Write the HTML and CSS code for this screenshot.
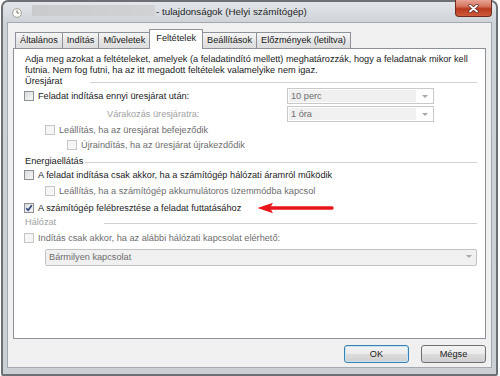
FILE: index.html
```html
<!DOCTYPE html>
<html lang="hu">
<head>
    <meta charset="UTF-8">
    <meta name="viewport" content="width=device-width, initial-scale=1.0">
    <title>tulajdonságok (Helyi számítógép)</title>
    <link rel="stylesheet" href="styles.css">
</head>
<body>
    <div class="window">
        <div class="titlebar">
            <svg class="app-icon" width="10" height="10" viewBox="0 0 10 10">
                <circle cx="5" cy="5" r="4.4" fill="#fbfbf6" stroke="#9a9a92" stroke-width="0.9"/>
                <path d="M5 2.2 V5 H7.2" fill="none" stroke="#6b6b66" stroke-width="0.9"/>
            </svg>
            <span class="task-name"></span>
            <span class="title">- tulajdonságok (Helyi számítógép)</span>
            <div class="close-btn">
                <svg width="11" height="9" viewBox="0 0 11 9">
                    <path d="M2 1.5 L9 7.5 M9 1.5 L2 7.5" stroke="#5a2a22" stroke-width="3.2" stroke-linecap="round"/>
                    <path d="M2 1.5 L9 7.5 M9 1.5 L2 7.5" stroke="#fff" stroke-width="1.8" stroke-linecap="round"/>
                </svg>
            </div>
        </div>

        <div class="client">
            <div class="tabs">
                <div class="tab">Általános</div>
                <div class="tab">Indítás</div>
                <div class="tab">Műveletek</div>
                <div class="tab active">Feltételek</div>
                <div class="tab">Beállítások</div>
                <div class="tab">Előzmények (letiltva)</div>
            </div>

            <div class="panel">
                <p class="intro">Adja meg azokat a feltételeket, amelyek (a feladatindító mellett) meghatározzák, hogy a feladatnak mikor kell<br>futnia. Nem fog futni, ha az itt megadott feltételek valamelyike nem igaz.</p>

                <div class="section">
                    <span class="section-label idle">Üresjárat</span>
                    <span class="section-line"></span>
                </div>
                <div class="row mt3">
                    <label class="check"><span class="box"></span>Feladat indítása ennyi üresjárat után:</label>
                    <div class="combo">
                        <span class="combo-value">10 perc</span>
                        <span class="combo-arrow"></span>
                    </div>
                </div>
                <div class="row mt4">
                    <span class="wait-label">Várakozás üresjáratra:</span>
                    <div class="combo">
                        <span class="combo-value">1 óra</span>
                        <span class="combo-arrow"></span>
                    </div>
                </div>
                <div class="row mt2 indent1">
                    <label class="check muted"><span class="box disabled"></span>Leállítás, ha az üresjárat befejeződik</label>
                </div>
                <div class="row mt1 indent2">
                    <label class="check muted"><span class="box disabled"></span>Újraindítás, ha az üresjárat újrakezdődik</label>
                </div>

                <div class="section mt4">
                    <span class="section-label power">Energiaellátás</span>
                    <span class="section-line"></span>
                </div>
                <div class="row mt2">
                    <label class="check"><span class="box"></span>A feladat indítása csak akkor, ha a számítógép hálózati áramról működik</label>
                </div>
                <div class="row mt2 indent1">
                    <label class="check muted"><span class="box disabled"></span>Leállítás, ha a számítógép akkumulátoros üzemmódba kapcsol</label>
                </div>
                <div class="row mt3">
                    <label class="check"><span class="box checked">
                        <svg width="8" height="8" viewBox="0 0 8 8"><path d="M1.3 4.2 L3.2 6.3 L6.8 1.2" fill="none" stroke="#2c3f7a" stroke-width="1.5"/></svg>
                    </span>A számítógép felébresztése a feladat futtatásához</label>
                    <svg class="red-arrow" width="78" height="12" viewBox="0 0 78 12">
                        <path d="M14 6 H75" stroke="#e8151b" stroke-width="3.4" stroke-linecap="round"/>
                        <path d="M0.5 6 L16 0.8 L13 6 L16 11.2 Z" fill="#e8151b"/>
                    </svg>
                </div>

                <div class="section mt2">
                    <span class="section-label net muted-light">Hálózat</span>
                    <span class="section-line"></span>
                </div>
                <div class="row mt4">
                    <label class="check muted"><span class="box disabled"></span>Indítás csak akkor, ha az alábbi hálózati kapcsolat elérhető:</label>
                </div>
                <div class="combo wide">
                    <span class="combo-value">Bármilyen kapcsolat</span>
                    <span class="combo-arrow"></span>
                </div>
            </div>

            <div class="buttons">
                <button class="btn default">OK</button>
                <button class="btn">Mégse</button>
            </div>
        </div>
    </div>
</body>
</html>
```

FILE: styles.css
```css
body {
    margin: 0;
    background: #fff;
    font-family: "Liberation Sans", Arial, sans-serif;
    font-size: 9.2px;
    color: #1b1b1b;
}
.window {
    box-sizing: border-box;
    width: 497px;
    height: 376px;
    margin-left: 1px;
    border: 2px solid #6c7075;
    border-radius: 7px 7px 2px 2px;
    background: linear-gradient(#e3e6e9, #cdd2d7 22px, #cbd0d5);
    padding: 0 4px 6px;
    display: flex;
    flex-direction: column;
}
.titlebar {
    height: 20px;
    display: flex;
    align-items: center;
    position: relative;
}
.app-icon {
    margin: 2px 0 0 5px;
}
.task-name {
    width: 123px;
    height: 11px;
    margin: -3px 0 0 10px;
    background: linear-gradient(90deg, #c9cbcd, #d0d2d4);
    filter: blur(0.6px);
}
.title {
    margin: -1px 0 0 1px;
    font-size: 9.8px;
    color: #1f1f1f;
}
.close-btn {
    position: absolute;
    right: 0;
    top: -2px;
    width: 37px;
    height: 17px;
    box-sizing: border-box;
    border: 1px solid #6e2c20;
    border-top: none;
    border-radius: 0 0 4px 4px;
    background: linear-gradient(#e8a394, #d4735e 40%, #b83a1f 55%, #cf5a3c);
    display: flex;
    align-items: center;
    justify-content: center;
}
.client {
    flex: 1;
    background: #f0f0f0;
    border: 1px solid #a3a9b0;
    padding: 7px 5px 0;
    display: flex;
    flex-direction: column;
}
.tabs {
    display: flex;
    align-items: flex-end;
    height: 18px;
    margin-left: 2px;
}
.tab {
    height: 15px;
    line-height: 15px;
    padding: 0 4px;
    border: 1px solid #8d9199;
    border-bottom: none;
    margin-right: -1px;
    background: linear-gradient(#f6f6f6, #e6e6e6 50%, #dcdcdc);
    white-space: nowrap;
}
.tab.active {
    position: relative;
    z-index: 1;
    height: 19px;
    line-height: 17px;
    margin-bottom: -1px;
    padding: 0 6px;
    background: #fff;
}
.panel {
    height: 291px;
    box-sizing: border-box;
    border: 1px solid #8d9199;
    background: #fff;
    padding: 0 8px 0 10px;
    display: flex;
    flex-direction: column;
}
.intro {
    margin: 0 0 0 1px;
    padding-top: 5px;
    line-height: 11px;
    white-space: nowrap;
}
.section {
    height: 10px;
    display: flex;
    align-items: center;
    margin-left: 1px;
}
.section-label {
    line-height: 10px;
}
.section-label.idle { width: 65px; }
.section-label.power { width: 60px; }
.section-label.net { width: 79px; }
.section-line {
    flex: 1;
    height: 1px;
    margin-top: 2px;
    background: #d2d2d2;
}
.row {
    height: 14px;
    display: flex;
    align-items: center;
    position: relative;
}
.mt1 { margin-top: 1px; }
.mt2 { margin-top: 2px; }
.mt3 { margin-top: 3px; }
.mt4 { margin-top: 4px; }
.indent1 { margin-left: 21px; }
.indent2 { margin-left: 43px; }
.check {
    display: flex;
    align-items: center;
    white-space: nowrap;
}
.box {
    box-sizing: border-box;
    width: 10px;
    height: 10px;
    margin-right: 4px;
    border: 1px solid #8e8f8f;
    background: linear-gradient(135deg, #d9dcdf, #f7f7f7);
    display: flex;
    align-items: center;
    justify-content: center;
}
.box.disabled {
    border-color: #c6c6c6;
    background: #f5f5f5;
}
.muted {
    color: #6d6d6d;
}
.muted-light, .wait-label {
    color: #a2a2a2;
}
.wait-label {
    margin-left: 83px;
}
.combo {
    box-sizing: border-box;
    width: 147px;
    height: 16px;
    margin: 0 43px 0 auto;
    padding: 1px;
    border: 1px solid #c9c9c9;
    background: #fff;
    display: flex;
    color: #6d6d6d;
}
.combo-value {
    flex: 1;
    background: #f0f0f0;
    padding-left: 2px;
    line-height: 12px;
}
.combo-arrow {
    width: 16px;
    position: relative;
}
.combo-arrow::after {
    content: "";
    position: absolute;
    left: 6px;
    top: 5px;
    border-left: 3px solid transparent;
    border-right: 3px solid transparent;
    border-top: 3px solid #a8a8a8;
}
.combo.wide {
    width: auto;
    height: 17px;
    margin: 4px 0 0 21px;
    padding: 0;
    border-color: #c3c3c3;
    border-radius: 2px;
    background: #f0f0f0;
}
.combo.wide .combo-value {
    line-height: 15px;
    padding-left: 3px;
}
.red-arrow {
    position: absolute;
    left: 233px;
    top: 1px;
}
.buttons {
    display: flex;
    justify-content: flex-end;
    gap: 12px;
    margin-top: 6px;
}
.btn {
    box-sizing: border-box;
    width: 65px;
    height: 18px;
    padding: 0;
    border: 1px solid #707070;
    border-radius: 3px;
    background: linear-gradient(#f3f3f3, #ebebeb 50%, #dddddd 50%, #cfcfcf);
    font-family: inherit;
    font-size: 9.2px;
    color: #1b1b1b;
}
.btn.default {
    border-color: #3c7fb1;
    box-shadow: inset 0 0 0 1px #c4e5f6;
}
```
